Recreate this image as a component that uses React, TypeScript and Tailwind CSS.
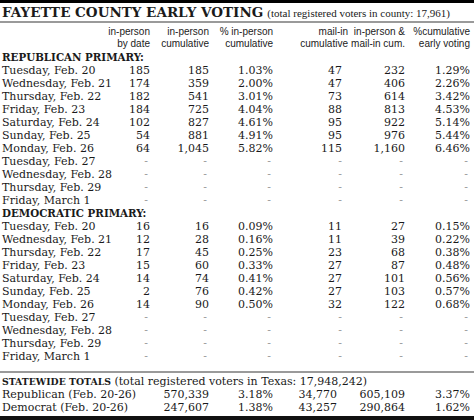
type Row = [string, string, string, string, string, string, string];

const rep: Row[] = [
  ["Tuesday, Feb. 20", "185", "185", "1.03%", "47", "232", "1.29%"],
  ["Wednesday, Feb. 21", "174", "359", "2.00%", "47", "406", "2.26%"],
  ["Thursday, Feb. 22", "182", "541", "3.01%", "73", "614", "3.42%"],
  ["Friday, Feb. 23", "184", "725", "4.04%", "88", "813", "4.53%"],
  ["Saturday, Feb. 24", "102", "827", "4.61%", "95", "922", "5.14%"],
  ["Sunday, Feb. 25", "54", "881", "4.91%", "95", "976", "5.44%"],
  ["Monday, Feb. 26", "64", "1,045", "5.82%", "115", "1,160", "6.46%"],
  ["Tuesday, Feb. 27", "-", "-", "-", "-", "-", "-"],
  ["Wednesday, Feb. 28", "-", "-", "-", "-", "-", "-"],
  ["Thursday, Feb. 29", "-", "-", "-", "-", "-", "-"],
  ["Friday, March 1", "-", "-", "-", "-", "-", "-"],
];

const dem: Row[] = [
  ["Tuesday, Feb. 20", "16", "16", "0.09%", "11", "27", "0.15%"],
  ["Wednesday, Feb. 21", "12", "28", "0.16%", "11", "39", "0.22%"],
  ["Thursday, Feb. 22", "17", "45", "0.25%", "23", "68", "0.38%"],
  ["Friday, Feb. 23", "15", "60", "0.33%", "27", "87", "0.48%"],
  ["Saturday, Feb. 24", "14", "74", "0.41%", "27", "101", "0.56%"],
  ["Sunday, Feb. 25", "2", "76", "0.42%", "27", "103", "0.57%"],
  ["Monday, Feb. 26", "14", "90", "0.50%", "32", "122", "0.68%"],
  ["Tuesday, Feb. 27", "-", "-", "-", "-", "-", "-"],
  ["Wednesday, Feb. 28", "-", "-", "-", "-", "-", "-"],
  ["Thursday, Feb. 29", "-", "-", "-", "-", "-", "-"],
  ["Friday, March 1", "-", "-", "-", "-", "-", "-"],
];

const DataRow = ({ row }: { row: Row }) => (
  <div className="grid grid-cols-[98px_50px_59px_64px_75px_57px_65px] h-[13px] leading-[13px]">
    <div className="whitespace-nowrap">{row[0]}</div>
    {row.slice(1).map((v, i) => (
      <div
        key={i}
        className={
          "text-right whitespace-nowrap " +
          (i === 3 ? "pr-[6px] " : "") +
          (v === "-" ? "text-[#9a9a9a] pr-[2px]" : "")
        }
      >
        {v}
      </div>
    ))}
  </div>
);

export default function App() {
  return (
    <div className="w-[474px] h-[420px] bg-white text-[#1a1a1a] overflow-hidden flex flex-col font-['DejaVu_Serif'] text-[11px]">
      <div className="h-[3px] bg-black shrink-0" />

      {/* Title */}
      <div className="h-[20px] shrink-0 flex items-baseline gap-[4px] px-[2px] pt-[3px] border-b-2 border-[#9a9a9a] whitespace-nowrap">
        <span className="font-bold text-[13.5px] leading-none">FAYETTE COUNTY EARLY VOTING</span>
        <span className="font-['Liberation_Serif'] text-[11px] leading-none">(total registered voters in county: 17,961)</span>
      </div>

      {/* Column headers */}
      <div className="grid grid-cols-[98px_50px_59px_64px_75px_57px_65px] shrink-0 pl-[2px] pt-[3px] font-['Liberation_Sans'] text-[10px] leading-[12px] text-[#222]">
        <div />
        <div className="text-right">in-person<br />by date</div>
        <div className="text-right">in-person<br />cumulative</div>
        <div className="text-right">% in-person<br />cumulative</div>
        <div className="text-right">mail-in<br />cumulative</div>
        <div className="text-right whitespace-nowrap">in-person &amp;<br />mail-in cum.</div>
        <div className="text-right">%cumulative<br />early voting</div>
      </div>

      <div className="pl-[2px] mt-[1px] shrink-0">
        <div className="font-bold text-[10.3px] h-[13px] leading-[13px]">REPUBLICAN PRIMARY:</div>
        {rep.map((r) => (
          <DataRow key={"r" + r[0]} row={r} />
        ))}
        <div className="font-bold text-[10.3px] h-[13px] leading-[13px]">DEMOCRATIC PRIMARY:</div>
        {dem.map((r) => (
          <DataRow key={"d" + r[0]} row={r} />
        ))}
      </div>

      {/* Statewide */}
      <div className="mt-[8px] shrink-0 border-t-2 border-[#9a9a9a] pl-[2px] pt-[2px]">
        <div className="whitespace-nowrap h-[13px] leading-[13px]">
          <span className="font-bold text-[9.3px]">STATEWIDE TOTALS</span> (total registered voters in Texas: 17,948,242)
        </div>
        <div className="grid grid-cols-[98px_50px_59px_64px_75px_57px_65px] h-[13px] leading-[13px]">
          <div className="whitespace-nowrap">Republican (Feb. 20-26)</div>
          <div />
          <div className="text-right">570,339</div>
          <div className="text-right">3.18%</div>
          <div className="text-right pr-[11px]">34,770</div>
          <div className="text-right">605,109</div>
          <div className="text-right">3.37%</div>
        </div>
        <div className="grid grid-cols-[98px_50px_59px_64px_75px_57px_65px] h-[13px] leading-[13px]">
          <div className="whitespace-nowrap">Democrat (Feb. 20-26)</div>
          <div />
          <div className="text-right">247,607</div>
          <div className="text-right">1.38%</div>
          <div className="text-right pr-[11px]">43,257</div>
          <div className="text-right">290,864</div>
          <div className="text-right">1.62%</div>
        </div>
      </div>

      <div className="flex-1" />
      <div className="h-[4px] bg-[#111] shrink-0" />
    </div>
  );
}
